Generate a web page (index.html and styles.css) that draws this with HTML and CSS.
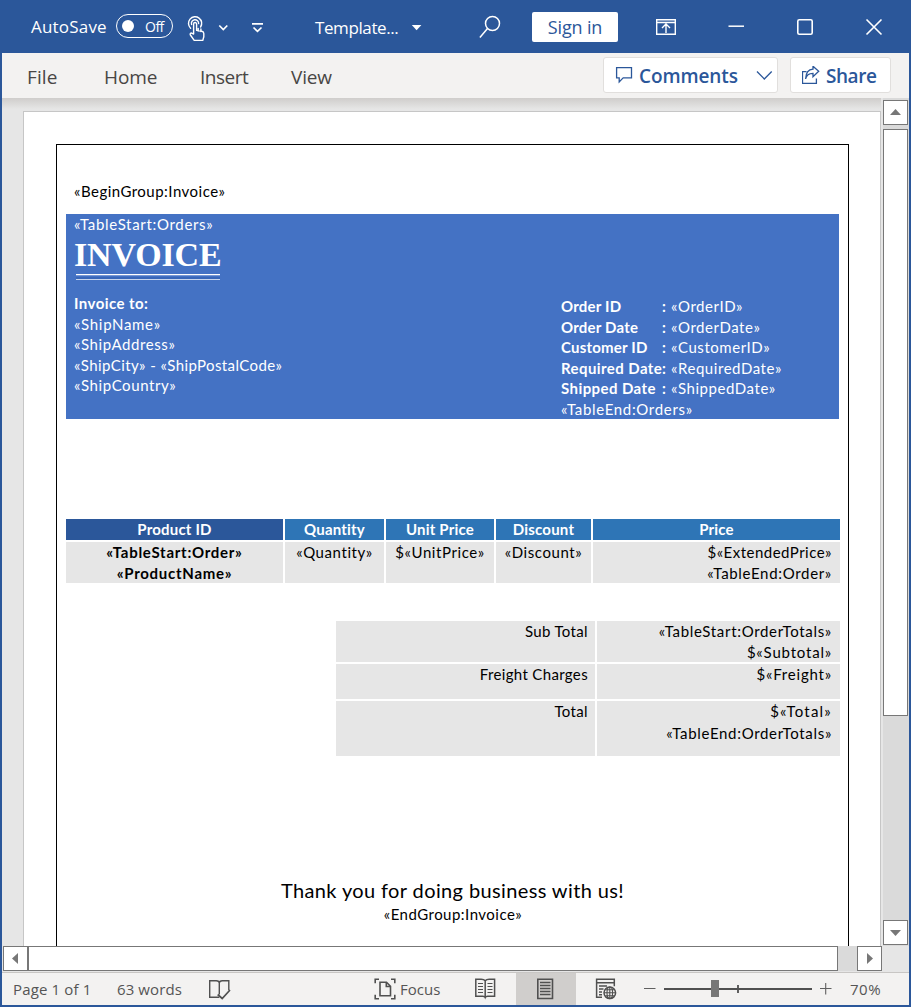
FILE: index.html
```html
<!DOCTYPE html>
<html lang="en">
<head>
<meta charset="utf-8">
<title>Template - Word</title>
<link rel="stylesheet" href="styles.css">
</head>
<body>
<div class="window">
  <header class="titlebar">
    <span class="autosave">AutoSave</span>
    <span class="toggle"><i class="dot"></i><span class="off">Off</span></span>
    <svg class="touch" width="24" height="53" viewBox="186 0 24 53" fill="none" stroke="#fff" stroke-width="1.4" stroke-linecap="round" stroke-linejoin="round">
      <path d="M190.6 28.2A6.6 6.6 0 1 1 200.6 27M191.6 24.5A3.6 3.6 0 1 1 198.6 23.6"/>
      <path d="M193.6 34V24a1.5 1.5 0 0 1 3 0v6.4l5.2.8c1.4.3 2 1 2 2.4v3.2l-1 3.6h-8.600l-3.800-5.400c-.8-1.200.6-2.600 1.800-1.600zM198.200 28.500v2.500M200.900 29v2.500"/>
    </svg>
    <svg class="drop" width="12" height="53" viewBox="217 0 12 53" fill="none" stroke="#fff" stroke-width="1.7"><path d="M219.300 25.500l4 4 4-4"/></svg>
    <svg class="qat" width="14" height="53" viewBox="250 0 14 53" fill="none" stroke="#fff" stroke-width="1.700"><path d="M252 23.800h11M253.500 27.500l4 3.800 4-3.800"/></svg>
    <span class="doc-name">Template...</span>
    <svg class="caret" width="12" height="53" viewBox="411 0 12 53"><path d="M411.800 25h9.600l-4.800 5.200z" fill="#fff"/></svg>
    <svg class="search" width="24" height="53" viewBox="478 0 24 53" fill="none" stroke="#fff" stroke-width="1.500"><circle cx="492.500" cy="23.500" r="7"/><path d="M487.500 28.600l-7.600 8.900"/></svg>
    <button class="signin">Sign in</button>
    <svg class="ribbon-opts" width="22" height="53" viewBox="655 0 22 53" fill="none" stroke="#fff" stroke-width="1.400"><path d="M656.700 19.700h18.600v14.600h-18.600zM656.700 22.500h18.600M666 33v-8M662 28l4-4 4 4"/></svg>
    <svg class="min" width="18" height="53" viewBox="727 0 18 53"><path d="M728.500 26.200h15.500" stroke="#fff" stroke-width="1.500"/></svg>
    <svg class="max" width="18" height="53" viewBox="796 0 18 53"><rect x="797.800" y="19.800" width="14.400" height="14.400" rx="1.500" fill="none" stroke="#fff" stroke-width="1.600"/></svg>
    <svg class="close" width="18" height="53" viewBox="865 0 18 53"><path d="M866.500 19.500l15 15M881.500 19.500l-15 15" stroke="#fff" stroke-width="1.600"/></svg>
  </header>

  <nav class="ribbon">
    <span class="tab file">File</span>
    <span class="tab home">Home</span>
    <span class="tab insert">Insert</span>
    <span class="tab view">View</span>
    <button class="action comments">
      <svg width="18" height="18" viewBox="615 66 18 18" fill="none" stroke="#2b579a" stroke-width="1.300"><path d="M616.600 67.600h14.900v10.300h-8.300l-4 4v-4h-2.600z"/></svg>
      <span>Comments</span>
      <svg class="chev" width="18" height="18" viewBox="754 66 18 18" fill="none" stroke="#2b579a" stroke-width="1.300"><path d="M755 71.500l7.300 7.500 7.400-7.500"/></svg>
    </button>
    <button class="action share">
      <svg width="18" height="18" viewBox="802 66 18 18" fill="none" stroke="#2b579a" stroke-width="1.300"><path d="M806.500 71.600h-4v11.800h13.900v-5M805.600 79c.8-4.200 3.400-5.700 7.400-5.700v3.500l5.700-5.600-5.700-5v3c-5 .2-7.200 4.600-7.400 9.800z"/></svg>
      <span>Share</span>
    </button>
  </nav>

  <div class="workspace">
    <main class="canvas">
      <article class="page">
        <div class="frame">
          <p class="line begin t1">«BeginGroup:Invoice»</p>
          <section class="banner">
            <p class="line t3">«TableStart:Orders»</p>
            <h1>INVOICE</h1>
            <div class="rule"></div>
            <div class="banner-cols">
              <div class="ship">
                <p class="line b">Invoice to:</p>
                <p class="line t3">«ShipName»</p>
                <p class="line t2">«ShipAddress»</p>
                <p class="line city">«ShipCity» - «ShipPostalCode»</p>
                <p class="line t2">«ShipCountry»</p>
              </div>
              <div class="order">
                <p class="line"><b>Order ID</b><b class="colon">:</b><span>«OrderID»</span></p>
                <p class="line"><b>Order Date</b><b class="colon">:</b><span>«OrderDate»</span></p>
                <p class="line"><b>Customer ID</b><b class="colon">:</b><span>«CustomerID»</span></p>
                <p class="line"><b class="req">Required Date</b><b class="colon">:</b><span>«RequiredDate»</span></p>
                <p class="line"><b class="req">Shipped Date</b><b class="colon">:</b><span>«ShippedDate»</span></p>
                <p class="line t3">«TableEnd:Orders»</p>
              </div>
            </div>
          </section>

          <div class="items">
            <div class="th first">Product ID</div><div class="th">Quantity</div><div class="th">Unit Price</div><div class="th">Discount</div><div class="th">Price</div>
            <div class="td b3">«TableStart:Order»<br>«ProductName»</div>
            <div class="td t2">«Quantity»</div>
            <div class="td t2">$«UnitPrice»</div>
            <div class="td t2">«Discount»</div>
            <div class="td right t1">$«ExtendedPrice»<br><span class="t3">«TableEnd:Order»</span></div>
          </div>

          <div class="totals">
            <div class="tc label">Sub Total</div><div class="tc"><span class="t3">«TableStart:OrderTotals»</span><br><span class="t4">$«Subtotal»</span></div>
            <div class="tc label">Freight Charges</div><div class="tc"><span class="t4">$«Freight»</span></div>
            <div class="tc label">Total</div><div class="tc last"><span class="t5">$«Total»</span><br><span class="t3">«TableEnd:OrderTotals»</span></div>
          </div>

          <p class="thanks">Thank you for doing business with us!</p>
          <p class="line end t1">«EndGroup:Invoice»</p>
        </div>
      </article>
    </main>
    <div class="vscroll">
      <div class="sbtn"><svg width="23" height="23"><path d="M6 14h11l-5.500-6z" fill="#777"/></svg></div>
      <div class="vthumb"></div>
      <div class="sbtn vdown"><svg width="23" height="23"><path d="M6 9h11l-5.500 6z" fill="#777"/></svg></div>
    </div>
  </div>

  <div class="hscroll">
    <div class="sbtn left"><svg width="23" height="23"><path d="M14 6v11l-6-5.500z" fill="#777"/></svg></div>
    <div class="hthumb"></div>
    <div class="htrack"></div>
    <div class="sbtn"><svg width="23" height="23"><path d="M9 6v11l6-5.500z" fill="#777"/></svg></div>
  </div>

  <footer class="status">
    <span class="pages">Page 1 of 1</span>
    <span class="words">63 words</span>
    <svg class="proof" width="24" height="32" viewBox="208 973 24 32" fill="none" stroke="#505050" stroke-width="1.400"><path d="M219.300 997.200h-9.600v-16.500h6.600c1.800 0 3 .7 3 2.300v11.500M219.300 983c0-1.600 1.200-2.300 3-2.300h6.500v9.500"/><path d="M217.700 994.500l4.500 4 7.800-8.500" stroke-width="1.700"/></svg>
    <svg class="focus-icon" width="24" height="32" viewBox="373 973 24 32" fill="none" stroke="#505050" stroke-width="1.600"><path d="M379 979.300h-3.800v4M391 979.300h3.800v4M379 998.700h-3.800v-4M391 998.700h3.800v-4M380 982.300h6.500l4 4v9.500H380zM386.300 982.300v4.200h4.200"/></svg>
    <span class="focus">Focus</span>
    <svg class="read" width="22" height="32" viewBox="474 973 22 32" fill="none" stroke="#505050" stroke-width="1.500"><path d="M485.200 980.800c-1-1.300-2.500-1.600-4-1.600h-5.400v17h7c1.200 0 2 .3 2.400 1.300.4-1 1.200-1.300 2.400-1.300h7v-17h-5.400c-1.500 0-3 .3-4 1.600zv16.500"/><path d="M478 983.500h5M478 986.500h5M478 989.500h5M478 992.500h5M487.500 983.500h5M487.500 986.500h5M487.500 989.500h5M487.500 992.500h5" stroke-width="1.200"/></svg>
    <span class="print"><svg width="18" height="32" viewBox="536 973 18 32" fill="none" stroke="#505050" stroke-width="1.600"><path d="M537.800 979.300h14.700v19.200h-14.700z"/><path d="M540 982.500h10.500M540 985.500h10.500M540 988.500h10.500M540 991.500h10.500M540 994.500h10.500" stroke-width="1.400"/></svg></span>
    <svg class="web" width="22" height="32" viewBox="595 973 22 32" fill="none" stroke="#505050" stroke-width="1.500"><path d="M602 997.300h-5.400v-18h17.700v7M596.600 982.700h17.700M599 986h8M599 989h4.500M599 992h3M599 994.800h3"/><circle cx="609.800" cy="992.800" r="5.800"/><path d="M604 992.800h11.600M609.800 987v11.600M605.500 989.800h8.600M605.500 995.800h8.600" stroke-width="1.100"/><ellipse cx="609.800" cy="992.800" rx="2.800" ry="5.800" stroke-width="1.100"/></svg>
    <svg class="zoom" width="190" height="32" viewBox="643 973 190 32"><path d="M644 988.500h11.500M820 988.500h11.500M825.700 983v11.500" stroke="#606060" stroke-width="1.100"/><path d="M664 989h148M738 985v8" stroke="#505050" stroke-width="1.800"/><path d="M711 980h8v17h-8z" fill="#777"/></svg>
    <span class="pct">70%</span>
  </footer>
</div>
</body>
</html>
```

FILE: styles.css
```css
* { box-sizing: border-box; }

body {
  margin: 0;
  font-family: "Open Sans", sans-serif;
}

p, h1 { margin: 0; }

button {
  padding: 0;
  font: inherit;
  color: #2b579a;
  background: #fff;
}

svg { display: block; flex: none; }

.window {
  width: 911px;
  height: 1007px;
  display: flex;
  flex-direction: column;
  border: solid #2b579a;
  border-width: 0 2px 2px;
  background: #e6e6e6;
  overflow: hidden;
}

/* Title bar */
.titlebar {
  height: 53px;
  flex: none;
  display: flex;
  align-items: center;
  padding-left: 29px;
  background: #2b579a;
  color: #fff;
  font-size: 17px;
  white-space: nowrap;
}
.autosave { width: 85px; letter-spacing: .2px; }
.toggle {
  width: 57px;
  height: 24px;
  display: flex;
  align-items: center;
  padding-left: 5px;
  border: 1.5px solid #fff;
  border-radius: 12px;
  font-size: 14px;
  margin-top: -1px;
}
.dot { width: 12px; height: 12px; border-radius: 50%; background: #fff; }
.off { margin-left: 11px; letter-spacing: -.5px; }
.touch { margin-left: 13px; }
.drop { margin-left: 7px; }
.qat { margin-left: 21px; }
.doc-name { width: 96px; margin-left: 51px; letter-spacing: -.4px; padding-top: 1px; }
.search { margin-left: 55px; }
.signin {
  width: 86px;
  height: 30px;
  margin-left: 30px;
  border: 0;
  border-radius: 2px;
  font-size: 18px;
  letter-spacing: -.15px;
}
.ribbon-opts { margin-left: 37px; }
.min { margin-left: 50px; }
.max { margin-left: 51px; }
.close { margin-left: 51px; }

/* Ribbon tabs */
.ribbon {
  height: 45px;
  flex: none;
  display: flex;
  align-items: flex-start;
  background: #f3f2f1;
  color: #484644;
  font-size: 19px;
}
.tab { height: 45px; line-height: 49px; }
.file { width: 77px; margin-left: 25px; letter-spacing: .1px; }
.home { width: 96px; letter-spacing: -.1px; }
.insert { width: 91px; letter-spacing: -.5px; }
.view { width: 312px; letter-spacing: -.2px; }
.action {
  height: 36px;
  margin-top: 4px;
  display: flex;
  align-items: center;
  border: 1px solid #e1dfdd;
  border-radius: 3px;
  font-weight: 600;
}
.action span { padding-top: 2px; }
.comments { width: 175px; padding-left: 11px; letter-spacing: -.1px; }
.comments span { width: 115px; text-align: left; margin-left: 6px; }
.chev { margin-left: 2px; }
.share { width: 101px; margin-left: 12px; padding-left: 11px; letter-spacing: -.45px; }
.share span { margin-left: 6px; }

/* Document area */
.workspace { height: 848px; flex: none; display: flex; overflow: hidden; }
.canvas {
  width: 879px;
  flex: none;
  padding: 13px 0 0 21px;
  background: linear-gradient(#cfcdcb, #e6e6e6 11px);
}
.page {
  width: 858px;
  height: 860px;
  padding: 32px 0 0 32px;
  border: 1px solid #c6c6c6;
  background: #fff;
}
.frame {
  width: 793px;
  height: 830px;
  padding: 0 8px 0 9px;
  border: 1px solid #000;
  color: #000;
  font-family: Lato, sans-serif;
  font-size: 15px;
  white-space: nowrap;
}
.line { height: 20.5px; line-height: 20.5px; }
.t1 { letter-spacing: .48px; }
.t2 { letter-spacing: .58px; }
.t3 { letter-spacing: .68px; }
.t4 { letter-spacing: .8px; }
.t5 { letter-spacing: 1.2px; }
.city { letter-spacing: .4px; }
.b { font-weight: bold; letter-spacing: .45px; }
.begin { margin: 36px 0 12.5px 8px; }

.banner {
  width: 773px;
  height: 205px;
  padding-left: 8px;
  background: #4472c4;
  color: #fff;
}
h1 {
  height: 39.5px;
  font: bold 34px/39px "Liberation Serif", serif;
  letter-spacing: -.15px;
}
.rule {
  width: 144px;
  height: 6px;
  margin-left: 2px;
  border-top: 1px solid #fff;
  border-bottom: 1px solid #c7d5ed;
  background: linear-gradient(#7898d4 1px, #4472c4 1px 2px, #3967b9 2px);
}
.banner-cols { display: flex; }
.ship { width: 487px; padding-top: 13px; }
.order { padding-top: 16px; }
.order .line { display: flex; }
.order b { width: 101px; letter-spacing: .2px; }
.order b.req { letter-spacing: .42px; }
.order b.colon { width: 9px; }
.order span { letter-spacing: .55px; }

.items {
  margin-top: 100px;
  display: grid;
  grid-template-columns: 217px 99px 108px 95px 247px;
  grid-template-rows: 21px 41px;
  gap: 2px;
  text-align: center;
  line-height: 21px;
}
.th { background: #2e75b6; color: #fff; font-weight: bold; letter-spacing: .2px; line-height: 20.5px; }
.th.first { background: #2b579a; }
.td, .tc { background: #e6e6e6; }
.b3 { font-weight: bold; letter-spacing: .73px; }
.right { text-align: right; padding-right: 8px; }

.totals {
  margin: 38px 0 0 270px;
  display: grid;
  grid-template-columns: 259px 243px;
  grid-template-rows: 41px 35px 55px;
  gap: 2px;
  text-align: right;
  line-height: 21px;
}
.tc { padding-right: 8px; }
.tc.label { padding-right: 7px; letter-spacing: .35px; }
.tc.last { line-height: 21.5px; }

.thanks {
  margin-top: 121px;
  padding-right: 1px;
  font-size: 20px;
  line-height: 26px;
  letter-spacing: .38px;
  text-align: center;
}
.end { margin-top: 1px; text-align: center; }

/* Scroll bars */
.vscroll {
  width: 28px;
  flex: none;
  display: flex;
  flex-direction: column;
  padding: 2px 1px 1px 2px;
  background: linear-gradient(to right, #e6e6e6 2px, #dadada 2px);
}
.sbtn {
  width: 25px;
  height: 25px;
  flex: none;
  border: 1px solid #777;
  background: #fff;
}
.vthumb { width: 25px; height: 587px; margin-top: 4px; border: 1px solid #777; background: #fff; }
.vdown { margin-top: auto; }
.hscroll { height: 26px; flex: none; display: flex; padding-left: 1px; }
.hthumb { width: 810px; height: 25px; border: 1px solid #777; background: #fff; }
.htrack { width: 19px; height: 25px; background: #dadada; }

/* Status bar */
.status {
  height: 33px;
  flex: none;
  display: flex;
  align-items: center;
  padding-left: 11px;
  border-top: 1px solid #c8c6c4;
  background: #f3f2f1;
  color: #555;
  font-size: 15px;
  white-space: nowrap;
}
.pages { width: 104px; letter-spacing: .15px; }
.words { width: 91px; letter-spacing: .1px; }
.focus-icon { margin-left: 141px; }
.focus { width: 74px; margin-left: 3px; }
.print {
  width: 60px;
  height: 32px;
  margin-left: 20px;
  padding-left: 20px;
  background: #d0cecc;
}
.web { margin-left: 19px; }
.zoom { margin-left: 26px; }
.pct { margin-left: 17px; letter-spacing: .5px; }
```
